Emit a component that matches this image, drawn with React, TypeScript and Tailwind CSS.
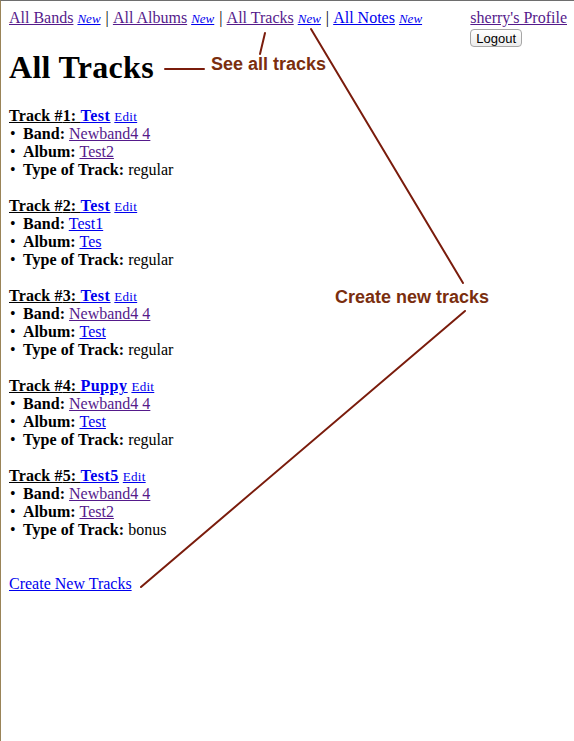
import React from "react";

interface Track {
  name: string;
  band: string;
  bandVisited: boolean;
  album: string;
  albumVisited: boolean;
  type: string;
}

const tracks: Track[] = [
  { name: "Test", band: "Newband4 4", bandVisited: true, album: "Test2", albumVisited: true, type: "regular" },
  { name: "Test", band: "Test1", bandVisited: false, album: "Tes", albumVisited: false, type: "regular" },
  { name: "Test", band: "Newband4 4", bandVisited: true, album: "Test", albumVisited: false, type: "regular" },
  { name: "Puppy", band: "Newband4 4", bandVisited: true, album: "Test", albumVisited: false, type: "regular" },
  { name: "Test5", band: "Newband4 4", bandVisited: true, album: "Test2", albumVisited: true, type: "bonus" },
];

const visited = "text-[#551a8b] underline";
const link = "text-[#0000ee] underline";

function Item({ label, children }: { label: string; children: React.ReactNode }) {
  return (
    <div className="flex h-[18px]">
      <span className="w-[13px] ml-[1px] shrink-0">•</span>
      <span className="whitespace-nowrap">
        <b className="tracking-[0.05px]">{label}</b> {children}
      </span>
    </div>
  );
}

function Sep() {
  return <span className="px-[1px]">|</span>;
}

export default function App() {
  return (
    <div
      className="relative w-[574px] h-[741px] bg-white border-t border-t-[#6e6e6e] border-l border-l-[#9a8458] overflow-hidden text-black text-[16px] leading-[18px]"
      style={{ fontFamily: '"Liberation Serif", "Times New Roman", serif' }}
    >
      <div className="pt-[8px] pl-[8px] pr-[7px]">
        {/* Nav */}
        <div className="flex justify-between items-start">
          <div className="whitespace-nowrap h-[18px]">
            <a className={visited}>All Bands</a>{" "}
            <a className={`${link} italic text-[13px] leading-[0]`}>New</a> <Sep />{" "}
            <a className={visited}>All Albums</a>{" "}
            <a className={`${link} italic text-[13px] leading-[0]`}>New</a> <Sep />{" "}
            <a className={visited}>All Tracks</a>{" "}
            <a className={`${link} italic text-[13px] leading-[0]`}>New</a> <Sep />{" "}
            <a className={link}>All Notes</a>{" "}
            <a className={`${link} italic text-[13px] leading-[0]`}>New</a>
          </div>
          <div className="flex flex-col items-start">
            <a className={visited}>sherry's Profile</a>
            <button
              className="mt-[2px] h-[18px] px-[5px] rounded-[4px] border border-[#a6a6a6] bg-gradient-to-b from-white to-[#ececec] text-[13px] leading-[15px] text-black"
              style={{ fontFamily: '"Liberation Sans", Arial, sans-serif' }}
            >
              Logout
            </button>
          </div>
        </div>

        <h1 className="mt-[2px] mb-[21px] text-[32px] leading-[37px] font-bold tracking-[0.3px]">All Tracks</h1>

        {/* Tracks */}
        <div className="flex flex-col gap-[18px]">
          {tracks.map((t, i) => (
            <div key={i}>
              <div className="h-[18px] whitespace-nowrap">
                <span className="underline font-bold tracking-[0.15px]">
                  Track #{i + 1}: <a className="text-[#0000ee] tracking-[0.5px]">{t.name}</a>
                </span>{" "}
                <a className={`${link} text-[13px] leading-[0] tracking-[0.3px]`}>Edit</a>
              </div>
              <Item label="Band:">
                <a className={t.bandVisited ? visited : link}>{t.band}</a>
              </Item>
              <Item label="Album:">
                <a className={t.albumVisited ? visited : link}>{t.album}</a>
              </Item>
              <Item label="Type of Track:">{t.type}</Item>
            </div>
          ))}
        </div>

        <div className="mt-[36px] h-[18px]">
          <a className={link}>Create New Tracks</a>
        </div>
      </div>

      {/* Annotations */}
      <svg className="absolute left-0 top-0 pointer-events-none" width="574" height="741" viewBox="-1 -1 574 741">
        <g stroke="#7a1c0c" strokeWidth="2" strokeLinecap="round">
          <line x1="163" y1="67" x2="202" y2="67" />
          <line x1="263" y1="31" x2="258" y2="52" />
          <line x1="309" y1="27" x2="461" y2="281" />
          <line x1="463" y1="309" x2="139" y2="585" />
        </g>
      </svg>
      <div
        className="absolute left-[210px] top-[54px] text-[18px] leading-[18px] font-bold text-[#7a2e0e] whitespace-nowrap"
        style={{ fontFamily: '"Liberation Sans", Arial, sans-serif' }}
      >
        See all tracks
      </div>
      <div
        className="absolute left-[334px] top-[287px] text-[18px] leading-[18px] font-bold text-[#7a2e0e] whitespace-nowrap"
        style={{ fontFamily: '"Liberation Sans", Arial, sans-serif' }}
      >
        Create new tracks
      </div>
    </div>
  );
}
